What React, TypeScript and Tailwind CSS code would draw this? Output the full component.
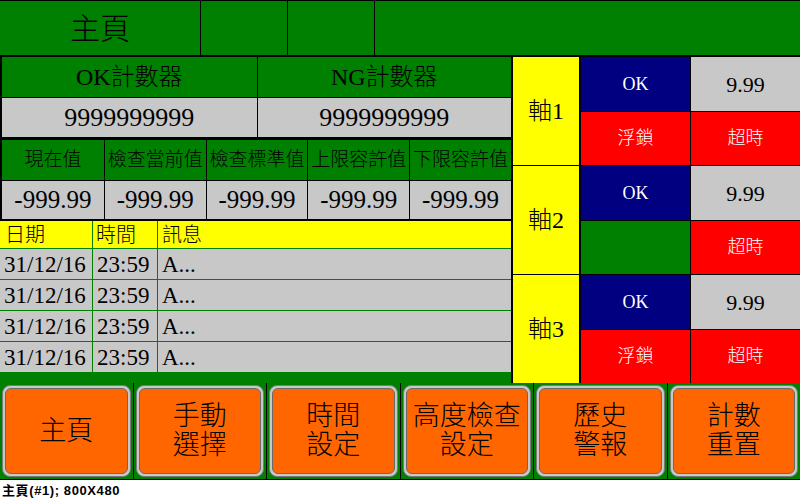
import React from "react";

const serif = "font-['Liberation_Serif','Noto_Sans_CJK_TC',serif]";

function Btn({ lines }: { lines: string[] }) {
  return (
    <div className="flex-1 p-[2px] border-l border-black first:border-l-0">
      <div className="h-full rounded-[8px] border border-[#7a7a7a] bg-[#c8c8c8] p-[2px]">
        <div className="h-full rounded-[6px] border border-[#6a6a6a] bg-[#ff6600] flex flex-col items-center justify-center text-[27px] leading-[29px] text-black">
          {lines.map((l, i) => (
            <div key={i}>{l}</div>
          ))}
        </div>
      </div>
    </div>
  );
}

function Axis({ n, r2c1 }: { n: number; r2c1: "lock" | "green" }) {
  return (
    <div className="flex h-[108px]">
      <div className="w-[66px] bg-[#ffff00] flex items-center justify-center text-[24px] text-black">
        軸{n}
      </div>
      <div className="w-[2px] bg-black" />
      <div className="flex-1 grid grid-cols-2 grid-rows-[54px_53px] gap-[1px] bg-black">
        <div className="bg-[#000080] text-white flex items-center justify-center text-[18px]">OK</div>
        <div className="bg-[#c8c8c8] text-black flex items-center justify-center text-[22px]">9.99</div>
        {r2c1 === "lock" ? (
          <div className="bg-[#ff0000] text-white flex items-center justify-center text-[18px]">浮鎖</div>
        ) : (
          <div className="bg-[#008000]" />
        )}
        <div className="bg-[#ff0000] text-white flex items-center justify-center text-[18px]">超時</div>
      </div>
    </div>
  );
}

export default function App() {
  const heads = ["現在值", "檢查當前值", "檢查標準值", "上限容許值", "下限容許值"];
  const rows = [0, 1, 2, 3];
  return (
    <div className={`w-[800px] h-[502px] bg-white flex flex-col overflow-hidden font-light ${serif}`}>
      {/* top bar */}
      <div className="flex h-[55px] border-t border-black bg-[#008000] text-black">
        <div className="w-[200px] flex items-center justify-center text-[30px]">主頁</div>
        <div className="w-[87px] border-l border-black" />
        <div className="w-[87px] border-l border-black" />
        <div className="flex-1 border-l border-black" />
      </div>
      <div className="h-[2px] bg-black" />

      {/* middle */}
      <div className="flex h-[326px]">
        <div className="w-[511px] flex flex-col">
          <div className="border-l-2 border-black flex flex-col">
            <div className="grid grid-cols-2 h-[41px] bg-[#008000] border-b border-black">
              <div className="flex items-center justify-center text-[24px]">OK計數器</div>
              <div className="flex items-center justify-center text-[24px] border-l border-black">NG計數器</div>
            </div>
            <div className="grid grid-cols-2 h-[39px] bg-[#c8c8c8]">
              <div className="flex items-center justify-center text-[26px]">9999999999</div>
              <div className="flex items-center justify-center text-[26px] border-l border-black">9999999999</div>
            </div>
            <div className="h-[3px] bg-black" />
            <div className="grid grid-cols-5 h-[41px] bg-[#008000] border-b border-black">
              {heads.map((h, i) => (
                <div
                  key={h}
                  className={`flex items-center justify-center text-[19px] whitespace-nowrap ${i > 0 ? "border-l border-black" : ""}`}
                >
                  {h}
                </div>
              ))}
            </div>
            <div className="grid grid-cols-5 h-[38px] bg-[#c8c8c8]">
              {heads.map((h, i) => (
                <div
                  key={h}
                  className={`flex items-center justify-center text-[25px] ${i > 0 ? "border-l border-black" : ""}`}
                >
                  -999.99
                </div>
              ))}
            </div>
            <div className="h-[2px] bg-black" />
          </div>

          {/* event table */}
          <div className="flex flex-col flex-1 bg-[#008000]">
            <div className="flex h-[28px] bg-[#ffff00] border-b border-[#008000] text-[20px] text-black">
              <div className="w-[92px] pl-[5px] flex items-center">日期</div>
              <div className="w-[65px] pl-[3px] flex items-center border-l border-[#008000]">時間</div>
              <div className="flex-1 pl-[4px] flex items-center border-l border-[#008000]">訊息</div>
            </div>
            {rows.map((r) => (
              <div
                key={r}
                className="flex h-[31px] bg-[#c8c8c8] border-b border-[#008000] last:border-b-0 last:h-[30px] text-[23px] text-black"
              >
                <div className="w-[92px] pl-[4px] pt-[2px] flex items-center whitespace-nowrap">31/12/16</div>
                <div className="w-[65px] pl-[4px] pt-[2px] flex items-center border-l border-[#008000]">23:59</div>
                <div className="flex-1 pl-[4px] pt-[2px] flex items-center border-l border-[#008000]">A...</div>
              </div>
            ))}
          </div>
        </div>
        <div className="w-[2px] bg-black" />
        <div className="flex-1 flex flex-col gap-[1px] bg-black">
          <Axis n={1} r2c1="lock" />
          <Axis n={2} r2c1="green" />
          <Axis n={3} r2c1="lock" />
        </div>
      </div>

      {/* bottom buttons */}
      <div className="flex h-[97px] bg-[#008000] border-b border-black">
        <Btn lines={["主頁"]} />
        <Btn lines={["手動", "選擇"]} />
        <Btn lines={["時間", "設定"]} />
        <Btn lines={["高度檢查", "設定"]} />
        <Btn lines={["歷史", "警報"]} />
        <Btn lines={["計數", "重置"]} />
      </div>

      {/* footer */}
      <div className="flex-1 pl-[2px] pt-[4px] font-['Liberation_Sans','Noto_Sans_CJK_TC',sans-serif] font-bold text-[13px] leading-[14px] tracking-[0.6px] text-black">
        主頁(#1); 800X480
      </div>
    </div>
  );
}
